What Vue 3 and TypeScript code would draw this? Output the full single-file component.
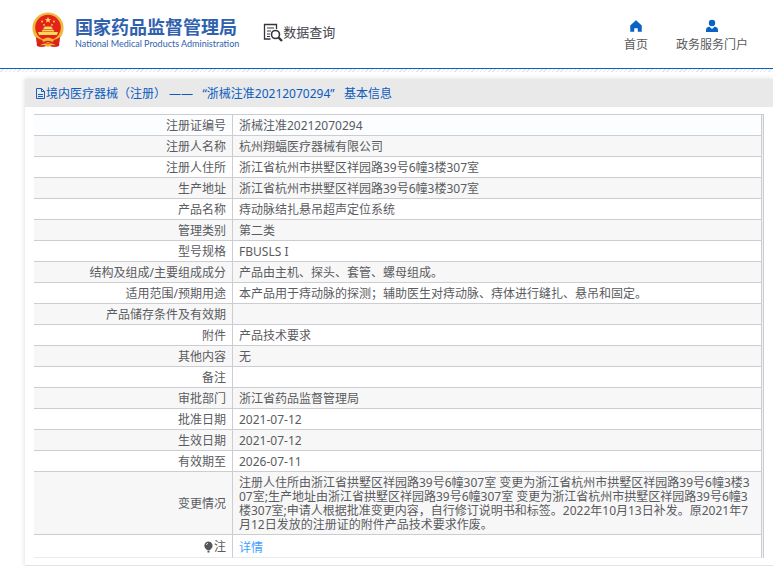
<script setup lang="ts">
interface Row {
  label: string
  value: string
}

const rows: Row[] = [
  { label: '注册证编号', value: '浙械注准20212070294' },
  { label: '注册人名称', value: '杭州翔蝠医疗器械有限公司' },
  { label: '注册人住所', value: '浙江省杭州市拱墅区祥园路39号6幢3楼307室' },
  { label: '生产地址', value: '浙江省杭州市拱墅区祥园路39号6幢3楼307室' },
  { label: '产品名称', value: '痔动脉结扎悬吊超声定位系统' },
  { label: '管理类别', value: '第二类' },
  { label: '型号规格', value: 'FBUSLS I' },
  { label: '结构及组成/主要组成成分', value: '产品由主机、探头、套管、螺母组成。' },
  { label: '适用范围/预期用途', value: '本产品用于痔动脉的探测；辅助医生对痔动脉、痔体进行缝扎、悬吊和固定。' },
  { label: '产品储存条件及有效期', value: '' },
  { label: '附件', value: '产品技术要求' },
  { label: '其他内容', value: '无' },
  { label: '备注', value: '' },
  { label: '审批部门', value: '浙江省药品监督管理局' },
  { label: '批准日期', value: '2021-07-12' },
  { label: '生效日期', value: '2021-07-12' },
  { label: '有效期至', value: '2026-07-11' },
  {
    label: '变更情况',
    value:
      '注册人住所由浙江省拱墅区祥园路39号6幢307室 变更为浙江省杭州市拱墅区祥园路39号6幢3楼307室;生产地址由浙江省拱墅区祥园路39号6幢307室 变更为浙江省杭州市拱墅区祥园路39号6幢3楼307室;申请人根据批准变更内容，自行修订说明书和标签。2022年10月13日补发。原2021年7月12日发放的注册证的附件产品技术要求作废。',
  },
]
</script>

<template>
  <div class="page">
    <header class="header">
      <a class="brand" href="#">
        <svg class="emblem" viewBox="0 0 32 36" aria-hidden="true">
          <path d="M4 23 L5 34 Q10 36 16 33.500 Q22 36 27 34 L28 23 Z" fill="#d81e13" />
          <circle cx="16" cy="16" r="15.600" fill="#f0b93a" />
          <circle cx="16" cy="15.500" r="12.800" fill="#e2231a" />
          <path d="M16 5 l.9 2 2.2.2 -1.7 1.4 .5 2.1 -1.9 -1.1 -1.9 1.1 .5 -2.1 -1.7 -1.4 2.2 -.2z" fill="#fbd75a" />
          <g fill="#fbd75a">
            <circle cx="10" cy="9.500" r=".9" />
            <circle cx="22" cy="9.500" r=".9" />
            <circle cx="12" cy="12.800" r=".9" />
            <circle cx="20" cy="12.800" r=".9" />
            <path d="M11.500 16 L13 14.600 H19 L20.500 16 V17.200 H11.500 Z" />
            <path d="M10.500 17.800 H21.500 L22.500 19.400 H9.500 Z" />
            <path d="M6 20 H26 L25 23 H7 Z" />
          </g>
          <path d="M4 25 Q10 30 16 27 Q22 30 28 25 L27 31 Q21 33 16 30 Q11 33 5 31 Z" fill="#e2231a" />
          <path d="M10 28 Q16 23 22 28 L20.500 30 Q16 27.500 11.500 30 Z" fill="#f0b93a" />
          <path d="M8 33.500 Q12 30 16 32.500 Q20 30 24 33.500 L20 33 L16 35 L12 33 Z" fill="#f0b93a" />
        </svg>
        <span class="brand-text">
          <span class="brand-cn">国家药品监督管理局</span>
          <span class="brand-en">National Medical Products Administration</span>
        </span>
      </a>
      <a class="query" href="#">
        <svg class="query-icon" viewBox="0 0 20 20" aria-hidden="true" fill="none" stroke="#34343f">
          <path d="M7.500 17 H1.500 V2.500 H13.500 V7" stroke-width="1.300" />
          <path d="M4 6 H11 M4 9 H8 M4 12 H7 M4 14.500 H7" stroke-width="1.200" />
          <circle cx="12.500" cy="12.500" r="4" stroke-width="1.600" />
          <path d="M15.500 15.500 L19 19" stroke-width="2.400" />
        </svg>
        <span>数据查询</span>
      </a>
      <nav class="nav">
        <a class="nav-item" href="#">
          <svg viewBox="0 0 14 14" aria-hidden="true">
            <path d="M7 1.500 L12.500 6.500 V12.500 H9 V9 H5 V12.500 H1.500 V6.500 Z" fill="#0b62c4" stroke="#0b62c4" stroke-width=".5" stroke-linejoin="round" />
          </svg>
          <span>首页</span>
        </a>
        <a class="nav-item" href="#">
          <svg viewBox="0 0 14 14" aria-hidden="true" fill="#0b62c4">
            <circle cx="7" cy="4" r="3.200" />
            <path d="M1 13 V11 Q1 8.200 4.500 7.800 L7 10 L9.500 7.800 Q13 8.200 13 11 V13 Z" />
          </svg>
          <span>政务服务门户</span>
        </a>
      </nav>
    </header>
    <div class="hatch"></div>

    <main class="panel">
      <h1 class="title">
        <svg class="doc-icon" viewBox="0 0 11 12" aria-hidden="true" fill="none" stroke="#1a5fbf">
          <path d="M1.500 .5 H6.500 L9.500 3.500 V10.500 H1.500 Z M6.500 .5 V3.500 H9.500 M3 6.500 H8 M3 8.500 H8" />
        </svg>
        <span>境内医疗器械（注册） ——&nbsp;&nbsp; “浙械注准20212070294”&nbsp;&nbsp; 基本信息</span>
      </h1>
      <div class="table-wrap">
        <table class="info">
          <tbody>
            <tr v-for="row in rows" :key="row.label">
              <th scope="row">{{ row.label }}</th>
              <td>{{ row.value }}</td>
            </tr>
            <tr class="note">
              <th scope="row">
                <span class="note-label">
                  <svg class="bulb" viewBox="0 0 11 12" aria-hidden="true">
                    <path d="M5.500 .5 A4.200 4.200 0 0 1 8 8 L7 9 H4 L3 8 A4.200 4.200 0 0 1 5.500 .5 Z M4.500 9.500 H6.500 V11.500 H4.500 Z" fill="#55565a" />
                    <path d="M3.300 4 Q3.600 2.600 5 2.300" fill="none" stroke="#fff" stroke-width=".8" />
                  </svg>注
                </span>
              </th>
              <td><a class="detail" href="#">详情</a></td>
            </tr>
          </tbody>
        </table>
      </div>
    </main>
  </div>
</template>

<style>
body {
  background: #fff;
}
</style>

<style scoped>
.page {
  overflow: hidden;
  font-family: "Noto Sans", "Noto Sans CJK SC", sans-serif;
  font-size: 12px;
  line-height: 14px;
  color: #5a5b60;
}
a {
  color: inherit;
  text-decoration: none;
}
.header {
  display: flex;
  align-items: center;
  height: 69px;
  box-sizing: border-box;
  padding: 0 25px 4px 32px;
  border-bottom: 1px solid #0b62c4;
}
.brand {
  display: flex;
  align-items: center;
  gap: 11px;
}
.emblem {
  width: 32px;
  height: 36px;
  margin-bottom: 4px;
}
.brand-text {
  display: flex;
  flex-direction: column;
  gap: 1px;
  color: #2f61ae;
  white-space: nowrap;
}
.brand-cn {
  font-size: 18px;
  line-height: 22px;
  font-weight: 700;
}
.brand-en {
  font-family: Lato, "Liberation Sans", sans-serif;
  font-size: 9px;
  line-height: 10px;
  font-weight: 400;
}
.query {
  display: flex;
  align-items: center;
  margin-left: 24px;
  font-size: 13px;
  color: #44444c;
}
.query-icon {
  width: 20px;
  height: 20px;
}
.nav {
  display: flex;
  gap: 28px;
  margin-left: auto;
}
.nav-item {
  display: flex;
  flex-direction: column;
  align-items: center;
  gap: 5px;
  padding-top: 6px;
}
.nav-item svg {
  width: 14px;
  height: 14px;
}
.hatch {
  height: 3px;
  background: repeating-linear-gradient(135deg, #fff 0 2px, #e4e4e4 2px 3px);
}
.panel {
  margin: 7px 0 0 25px;
  padding-bottom: 7px;
  border-bottom: 1px solid #e3e3e6;
  box-shadow: 0 0 5px rgba(0, 0, 0, 0.15);
}
.title {
  display: flex;
  align-items: center;
  margin: 0;
  padding: 8px 10px 6px;
  background: #e9e9e9;
  color: #0c5bc0;
  font-size: 12px;
  font-weight: 400;
  white-space: pre;
}
.doc-icon {
  width: 11px;
  height: 12px;
}
.table-wrap {
  margin: 7px 9px 0;
  padding-right: 1px;
  border-right: 1px solid #cdccd2;
  border-top: 1px solid #cdccd0;
  background: #f1f1f5;
}
.info {
  width: 100%;
  table-layout: fixed;
  border-spacing: 0;
  background: #fff;
}
.info tr:nth-child(even) {
  background: #f7f7f7;
}
.info tr:first-child {
  background: #fbfdff;
}
th,
td {
  height: 14px;
  padding: 4px 6px 2px;
  border-right: 1px solid #cdccd0;
  border-bottom: 1px solid #cdccd0;
  font-weight: 400;
  word-break: break-all;
}
th {
  width: 186px;
  text-align: right;
}
td {
  text-align: left;
}
.info .note {
  background: #fff;
}
.note th,
.note td {
  height: 16px;
  padding-top: 5px;
  padding-bottom: 1px;
  border-bottom-color: #e8e9f1;
}
.note-label {
  display: inline-flex;
  align-items: center;
}
.bulb {
  width: 11px;
  height: 12px;
}
.detail {
  color: #409eff;
}
</style>
